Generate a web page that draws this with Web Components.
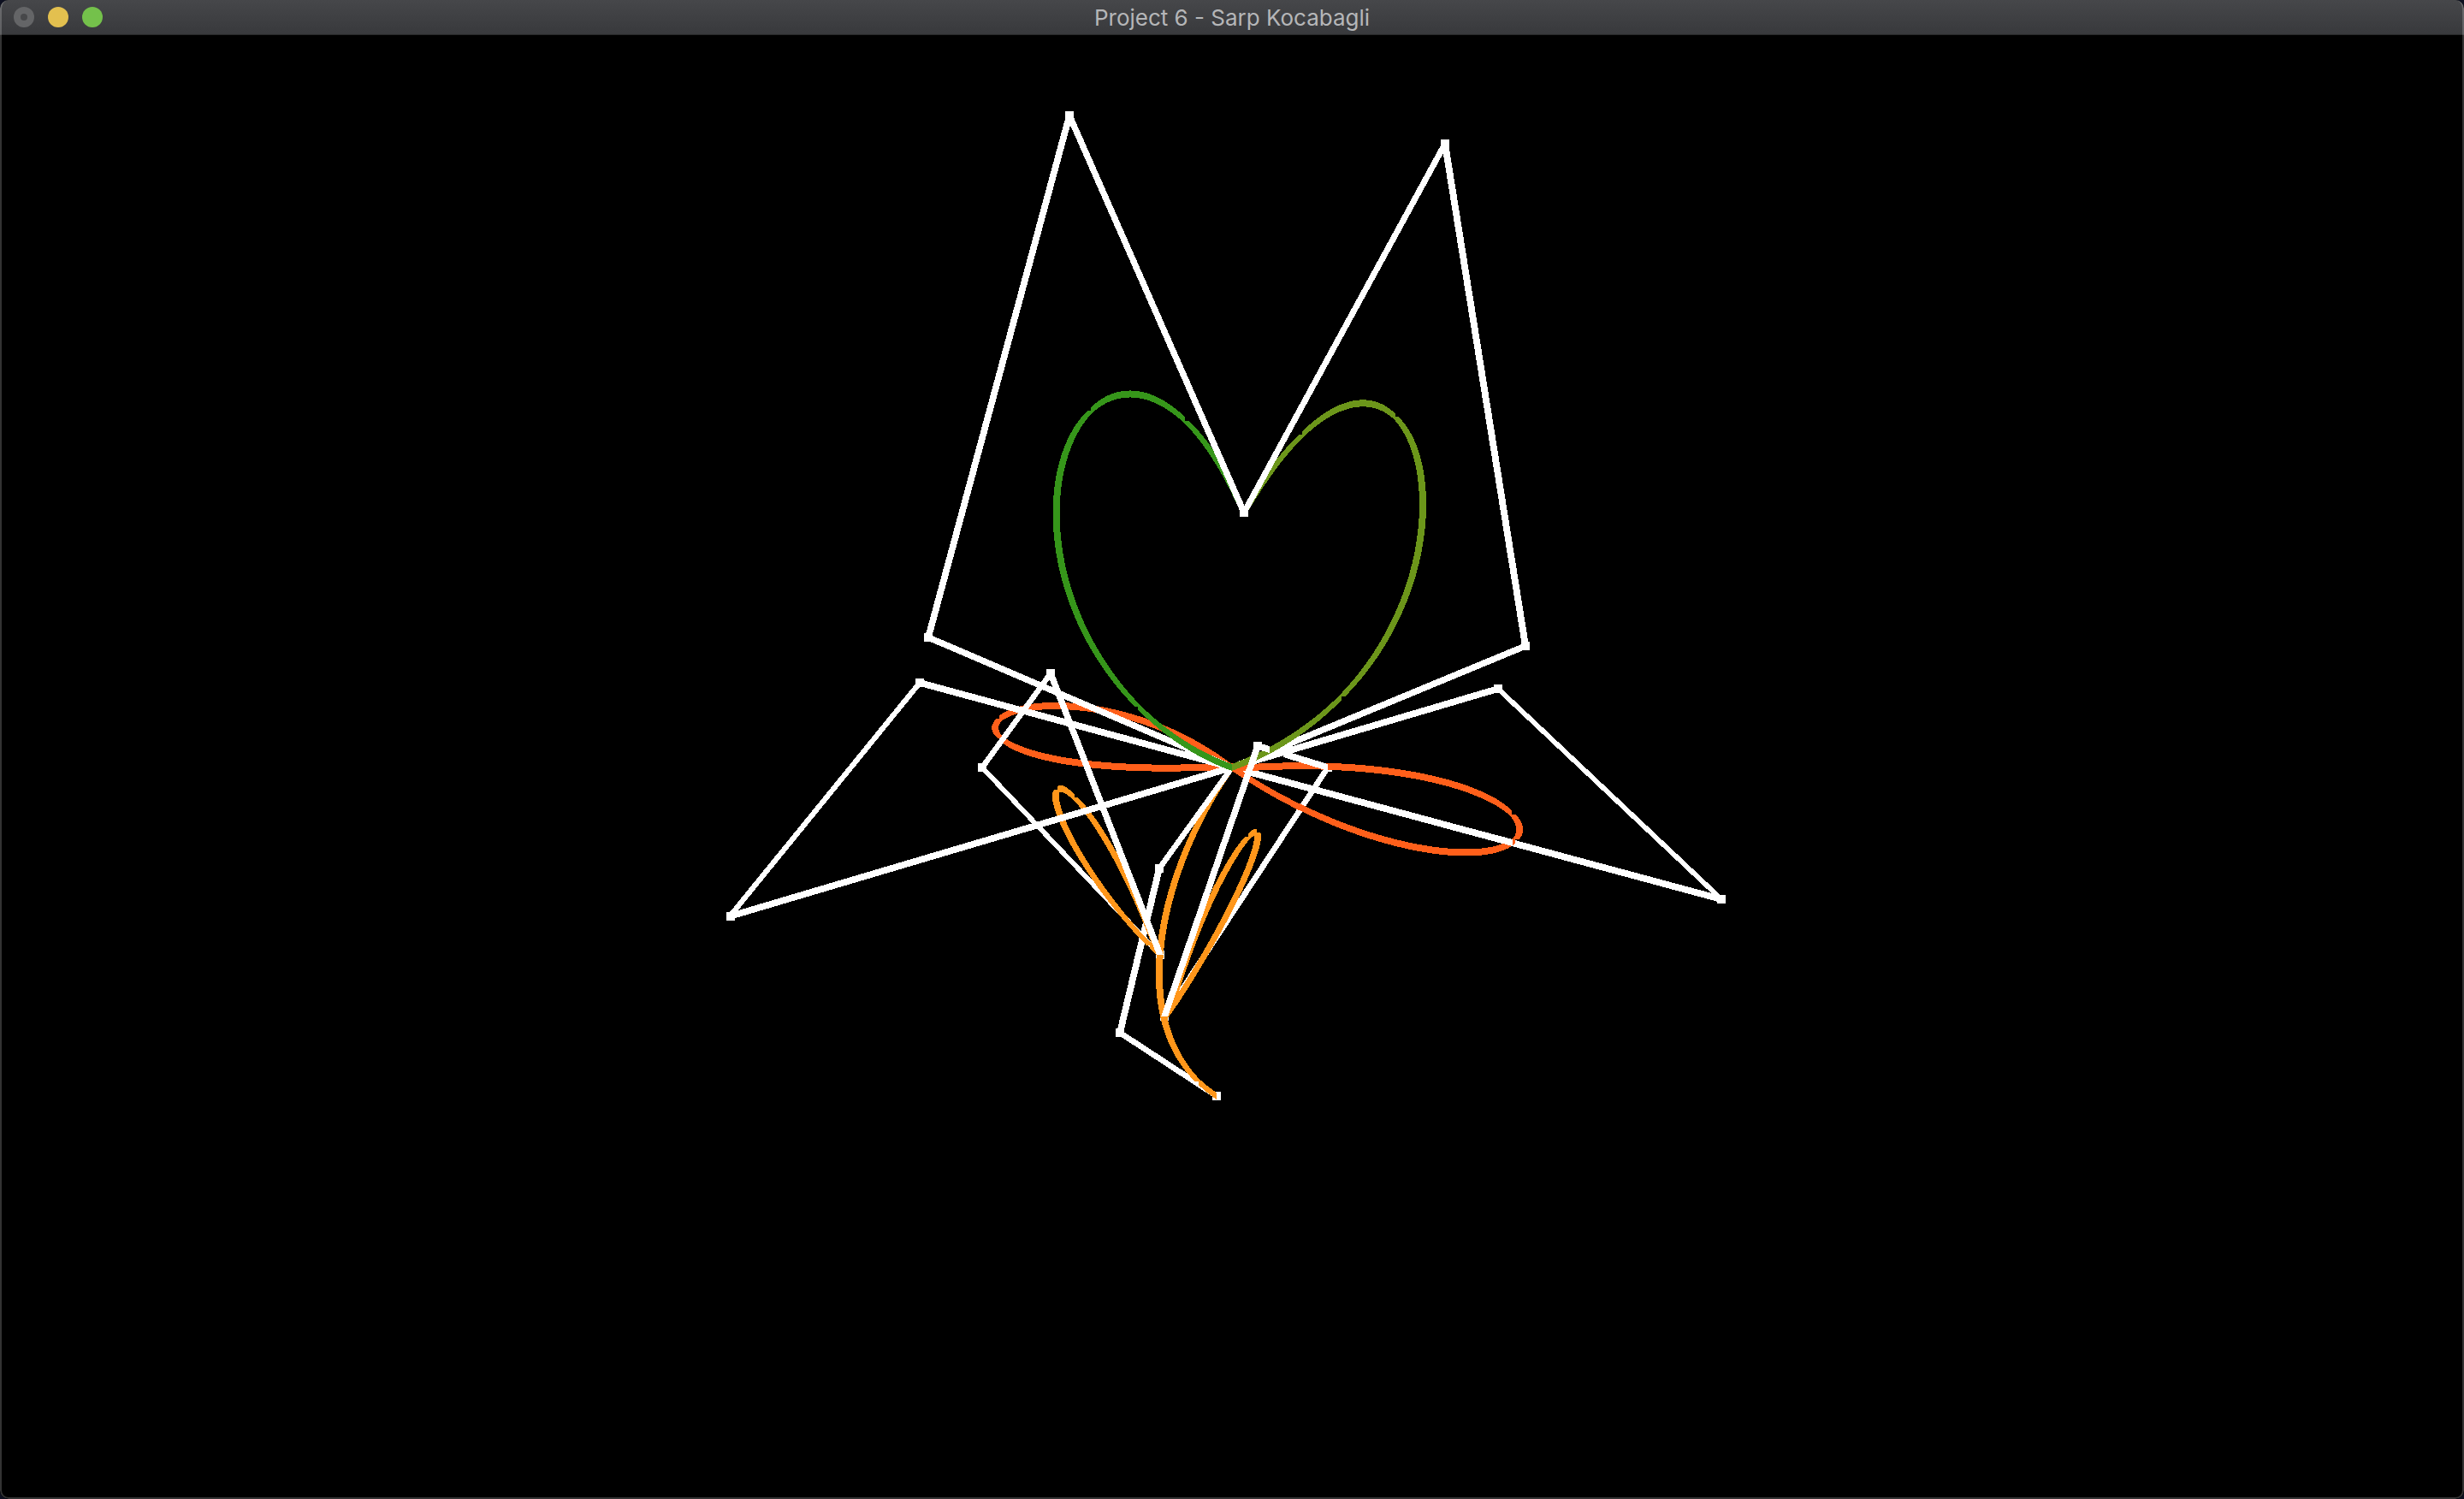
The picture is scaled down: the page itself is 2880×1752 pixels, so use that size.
<!DOCTYPE html>
<html lang="en">
<head>
<meta charset="utf-8">
<title>Project 6 - Sarp Kocabagli</title>
<style>
  html, body { margin: 0; height: 100%; background: #0d1020; }
  body { font-family: Inter, "Liberation Sans", sans-serif; }
</style>
</head>
<body>
<app-window>
  <title-bar slot="bar">Project 6 - Sarp Kocabagli</title-bar>
  <curve-canvas></curve-canvas>
</app-window>

<script>
class AppWindow extends HTMLElement {
  constructor() {
    super();
    this.attachShadow({ mode: 'open' }).innerHTML = `
      <style>
        :host { display: flex; flex-direction: column; height: 100vh; position: relative;
                background: #000; border-radius: 10px; overflow: hidden; }
        :host::after { content: ""; position: absolute; inset: 0; border-radius: 10px;
                border: 2px solid rgba(255, 255, 255, .2); border-top: 0; pointer-events: none; }
        main { flex: 1; min-height: 0; display: flex; }
      </style>
      <slot name="bar"></slot>
      <main><slot></slot></main>`;
  }
}

class WindowButton extends HTMLElement {
  constructor() {
    super();
    this.attachShadow({ mode: 'open' }).innerHTML = `
      <style>
        :host { display: block; }
        button { display: grid; place-items: center; width: 24px; height: 24px; padding: 0;
                 border: 0; border-radius: 50%; background: var(--fill); }
        button::before { content: ""; width: 8px; height: 8px; border-radius: 50%;
                 background: var(--mark, transparent); }
      </style>
      <button type="button" aria-label="${this.getAttribute('label')}"></button>`;
  }
}

class TitleBar extends HTMLElement {
  constructor() {
    super();
    this.attachShadow({ mode: 'open' }).innerHTML = `
      <style>
        :host { display: grid; grid-template-columns: 1fr auto 1fr; align-items: center;
                height: 40px; padding: 0 16px; border-bottom: 1px solid #29292a;
                background: linear-gradient(#46474a, #38393c); color: #b5b6b8;
                font-size: 26px; line-height: 36px; }
        nav { display: flex; gap: 16px; }
        h1 { margin: 0; padding-top: 2px; font: inherit; white-space: nowrap; }
      </style>
      <nav aria-label="Window">
        <window-button label="Close" style="--fill:#646567;--mark:#47484a"></window-button>
        <window-button label="Minimize" style="--fill:#e3c04f"></window-button>
        <window-button label="Zoom" style="--fill:#74c14b"></window-button>
      </nav>
      <h1><slot></slot></h1>`;
  }
}

const WHITE = '#fff', GREEN = '#36961a', OLIVE = '#6c961a', RED = '#ff5f1a', ORANGE = '#ff961a';
const C = [1440, 897];

/* Each layer is a colour, a kind and its points; later layers lie over earlier ones. */
const LAYERS = [
  [WHITE, 'line', [1075, 798], [853, 1071], C],
  [WHITE, 'line', C, [1751, 805], [2012, 1051]],
  [WHITE, 'line', C, [1500, 913]],
  [WHITE, 'line', [1552, 897], [1361, 1188]],
  [WHITE, 'line', [1148, 897], [1356, 1116]],
  [WHITE, 'line', [1355, 1015], [1309, 1207], [1422, 1281]],
  [WHITE, 'dots', [1075, 798], [854, 1071], [1751, 805], [2012, 1051], [1228, 787], [1148, 897],
    [1470, 872], [1552, 897], [1356, 1116], [1361, 1188], [1422, 1281], [1309, 1207],
    [1355, 1015], [1250, 135], [1085, 745], [1689, 168], [1783, 755], [1454, 599], C],
  [ORANGE, 'curve', C, [1355, 1015], [1309, 1207], [1422, 1281]],
  [ORANGE, 'curve', [1356, 1116], [1351, 1123], [1253, 748], [1082, 861], [1352, 1116], [1356, 1116]],
  [ORANGE, 'curve', [1361, 1188], [1387, 1160], [1403, 913], [1653, 769], [1342, 1226], [1361, 1188]],
  [RED, 'curve', C, [1401, 871], [1162, 663], [835, 983], [1485, 883], C],
  [WHITE, 'line', C, [1355, 1015]],
  [WHITE, 'line', [853, 1071], C],
  [WHITE, 'line', [1075, 798], C],
  [WHITE, 'line', [1500, 913], [2012, 1051]],
  [RED, 'curve', C, [1465, 913], [1890, 1233], [2059, 791], [1426, 909], C],
  [WHITE, 'line', [1700, 967], [1768, 985]],
  [WHITE, 'line', [1356, 1116], [1228, 787], [1148, 897]],
  [WHITE, 'line', [1250, 135], [1085, 745], C],
  [WHITE, 'line', [1689, 168], [1783, 755], C],
  [GREEN, 'curve', [1454, 599], [1302, 251], [1097, 589], [1269, 836], C],
  [OLIVE, 'curve', [1454, 599], [1671, 231], [1794, 762], C],
  [WHITE, 'line', [1361, 1188], [1470, 872]],
  [WHITE, 'line', [1500, 881], [1552, 897]],
  [WHITE, 'line', [1470, 872], [1484, 876]],
  [WHITE, 'line', [1250, 135], [1454, 599], [1689, 168]]
];

/* Point of a Bezier curve of any degree. */
function casteljau(points, t) {
  while (points.length > 1)
    points = points.slice(1).map((q, i) => [
      points[i][0] + (q[0] - points[i][0]) * t,
      points[i][1] + (q[1] - points[i][1]) * t]);
  return points[0];
}

/* A raster-style segment: widened along the axis it runs across. */
function segment(a, b, h) {
  if (Math.abs(b[0] - a[0]) >= Math.abs(b[1] - a[1])) {
    if (a[0] > b[0]) [a, b] = [b, a];
    return `M${a[0]} ${a[1] - h}L${b[0]} ${b[1] - h}L${b[0]} ${b[1] + h}L${a[0]} ${a[1] + h}Z`;
  }
  if (a[1] > b[1]) [a, b] = [b, a];
  return `M${a[0] - h} ${a[1]}L${a[0] + h} ${a[1]}L${b[0] + h} ${b[1]}L${b[0] - h} ${b[1]}Z`;
}

const strip = (points, h) => points.slice(1).map((p, i) => segment(points[i], p, h)).join('');
const shapes = {
  line: points => strip(points, 4),
  curve: points => strip(Array.from({ length: 101 }, (_, i) => casteljau(points, i / 100)), 4),
  dots: points => points.map(([x, y]) => `M${x - 5} ${y - 5}h10v10h-10Z`).join('')
};

class CurveCanvas extends HTMLElement {
  constructor() {
    super();
    this.attachShadow({ mode: 'open' }).innerHTML = `
      <style>
        :host { display: block; flex: 1; min-width: 0; background: #000; }
        svg { display: block; width: 100%; height: 100%; }
      </style>
      <svg viewBox="0 41 2880 1711" preserveAspectRatio="xMidYMin meet" shape-rendering="crispEdges"
           role="img" aria-label="Flower of Bezier curves with their control lines">
        ${LAYERS.map(([fill, kind, ...points]) => `<path fill="${fill}" d="${shapes[kind](points)}"/>`).join('')}
      </svg>`;
  }
}

customElements.define('window-button', WindowButton);
customElements.define('title-bar', TitleBar);
customElements.define('curve-canvas', CurveCanvas);
customElements.define('app-window', AppWindow);
</script>
</body>
</html>
